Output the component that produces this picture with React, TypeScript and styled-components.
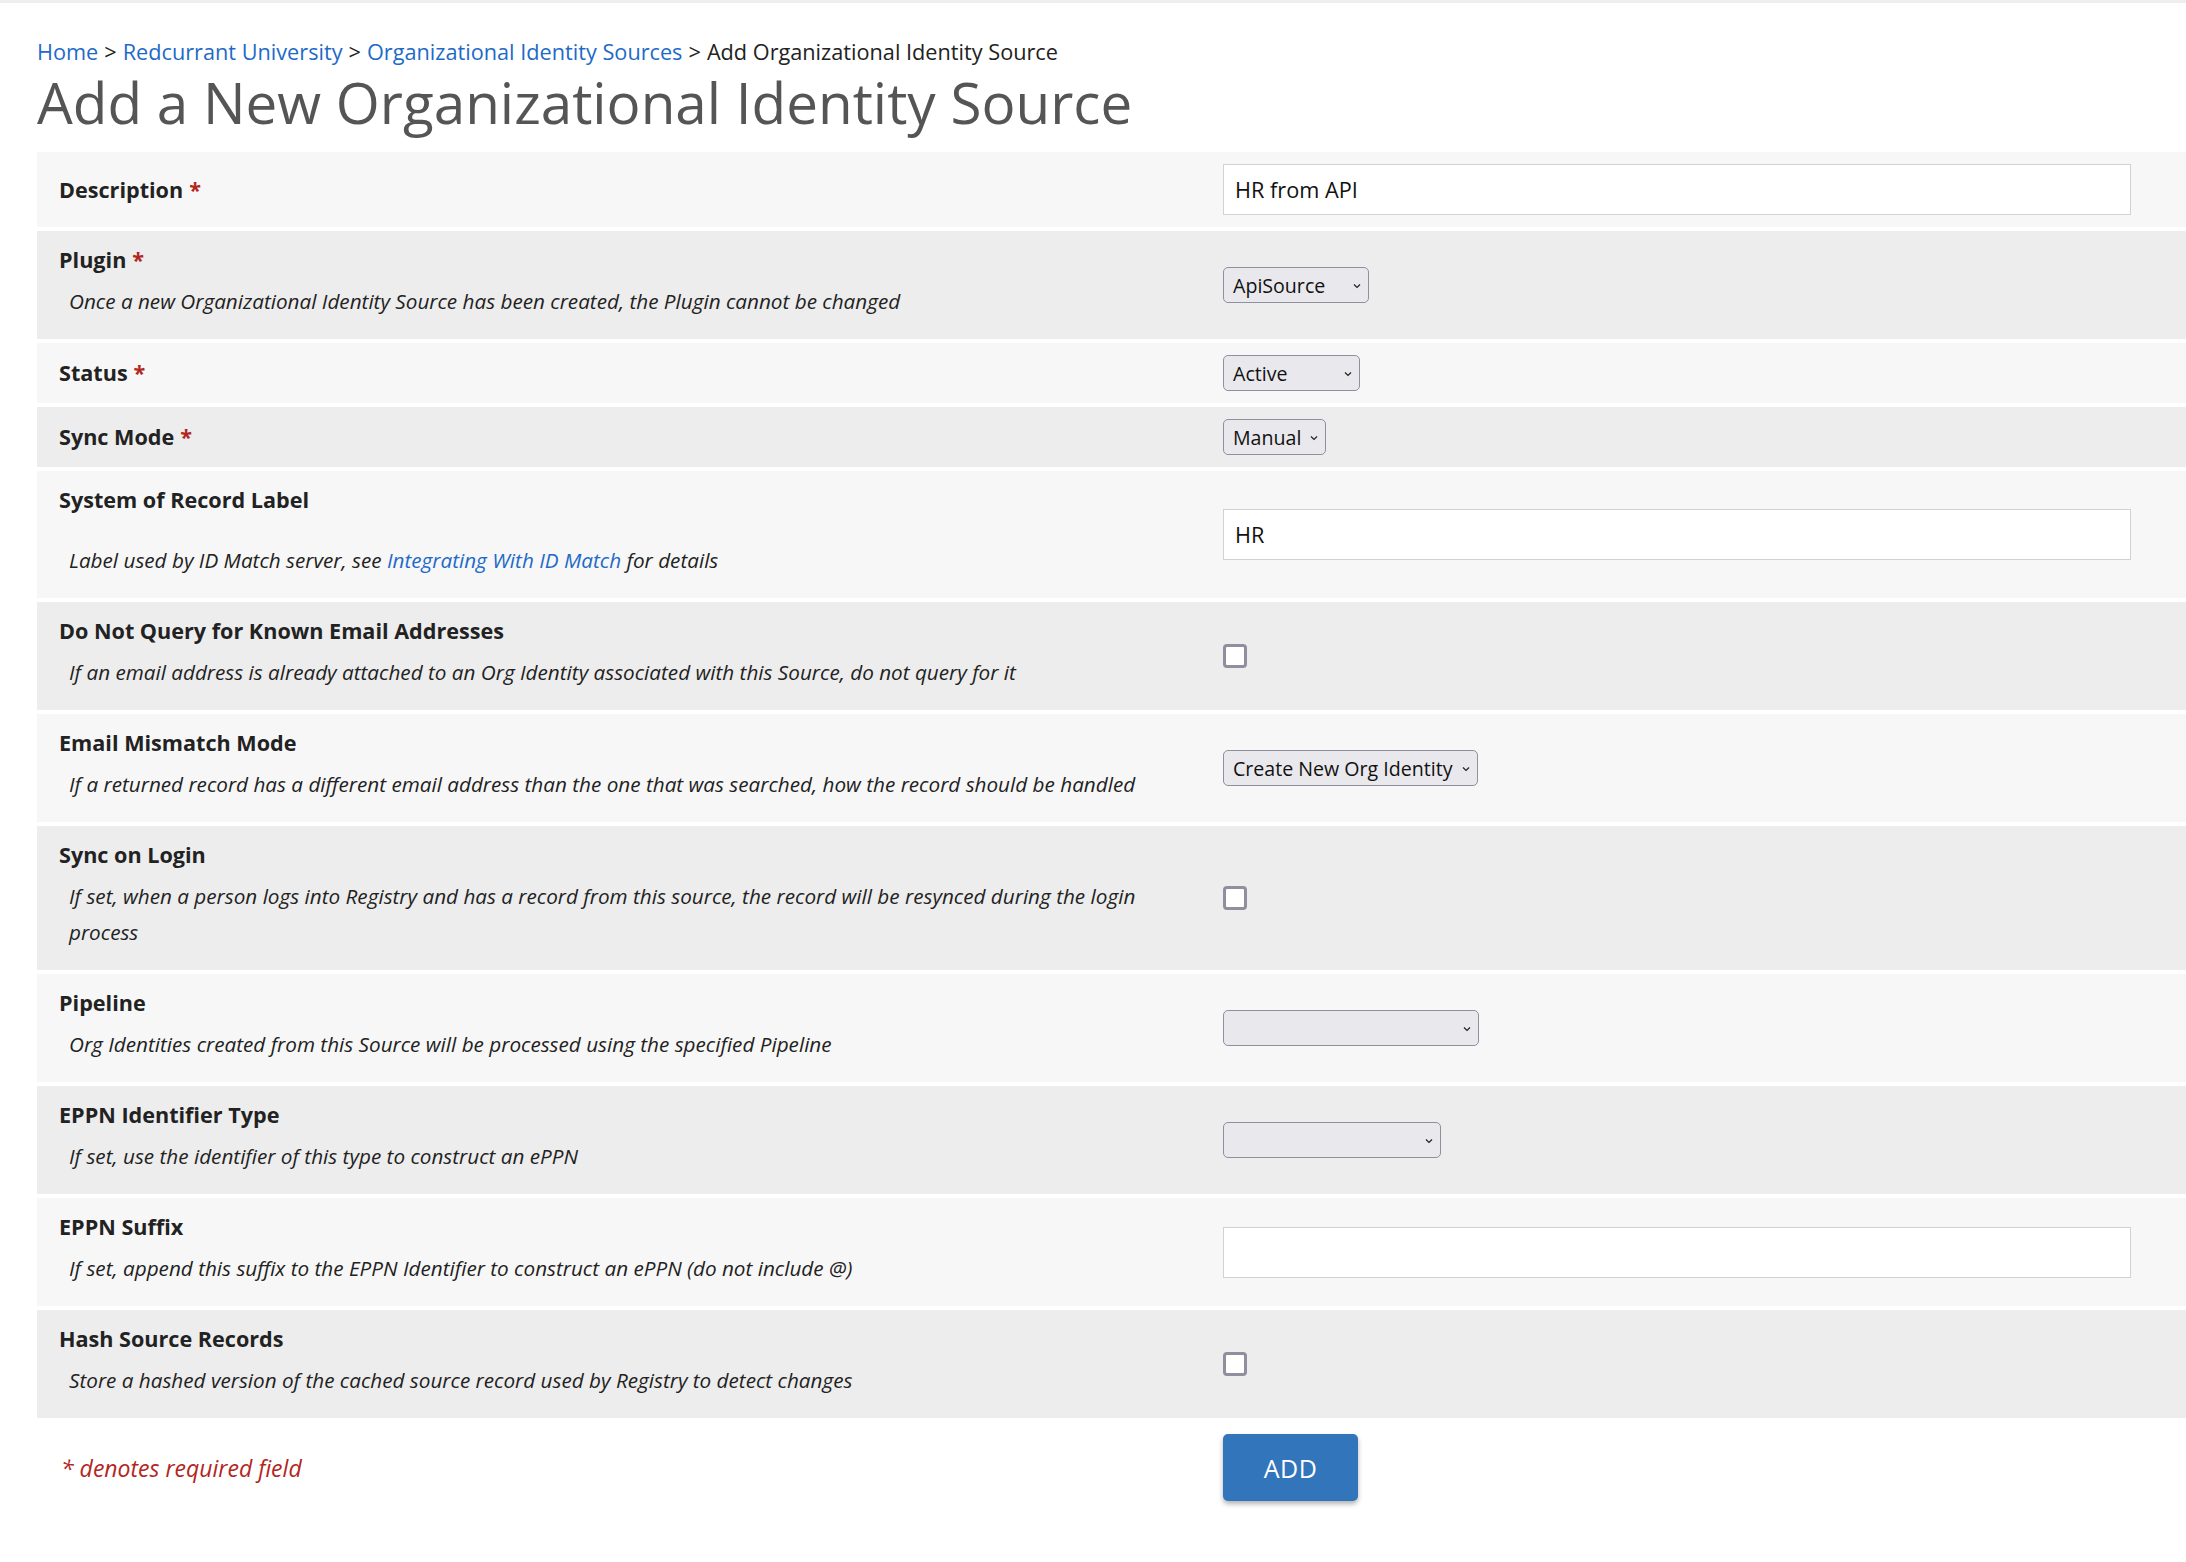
import React from 'react';
import styled, { createGlobalStyle } from 'styled-components';

const GlobalStyle = createGlobalStyle`
  html, body {
    margin: 0;
    padding: 0;
    background: #fff;
  }
  body {
    font-family: "Open Sans", "Noto Sans", sans-serif;
    color: #222;
    overflow-x: hidden;
  }
`;

const Page = styled.main`
  border-top: 3px solid #eeeeee;
  padding: 34px 0 40px 37px;
`;

const Breadcrumbs = styled.nav`
  font-size: 21.7px;
  line-height: 30px;
  color: #222;
`;

const Crumb = styled.a`
  color: #1e6ac8;
  text-decoration: none;
`;

const Separator = styled.span`
  padding: 0 6px;
`;

const Title = styled.h1`
  margin: 3px 0 16px;
  font-size: 56.6px;
  line-height: 66px;
  font-weight: 400;
  color: #555;
`;

const Form = styled.form`
  display: flex;
  flex-direction: column;
  gap: 4px;
`;

const Row = styled.div<{ $shade: boolean }>`
  display: grid;
  grid-template-columns: 1171px 1fr;
  align-items: center;
  background: ${p => (p.$shade ? '#ededed' : '#f7f7f7')};
`;

const LabelCell = styled.div`
  padding: 12px 28px 12px 22px;
`;

const Label = styled.label`
  display: block;
  font-size: 21.6px;
  line-height: 34px;
  font-weight: 700;
  color: #222;
`;

const Required = styled.span`
  color: #b3261e;
  margin-left: 6px;
`;

const Description = styled.div<{ $spaced?: boolean }>`
  margin-top: ${p => (p.$spaced ? '25px' : '6px')};
  padding: 0 0 8px 10px;
  font-size: 20.7px;
  line-height: 36px;
  font-style: italic;
  color: #222;
`;

const DocLink = styled.a`
  color: #1e6ac8;
  text-decoration: none;
`;

const ControlCell = styled.div`
  padding: 12px 55px 12px 15px;
  display: flex;
  align-items: center;
`;

const TextInput = styled.input`
  box-sizing: border-box;
  width: 100%;
  height: 51px;
  padding: 0 11px;
  border: 1px solid #d2d2d2;
  background: #fff;
  font-family: "Open Sans", sans-serif;
  font-size: 21.7px;
  color: #111;
  outline: none;
`;

const SelectWrap = styled.div`
  position: relative;
  display: inline-flex;
`;

const NativeSelect = styled.select<{ $width: number }>`
  box-sizing: border-box;
  appearance: none;
  width: ${p => p.$width}px;
  height: 36px;
  padding: 0 24px 0 9px;
  border: 1px solid #8f8f9d;
  border-radius: 5px;
  background: #e9e9ed;
  font-family: "Open Sans", sans-serif;
  font-size: 19.6px;
  color: #111;
`;

const Chevron = styled.svg`
  position: absolute;
  right: 8px;
  top: 50%;
  width: 8px;
  height: 6px;
  margin-top: -2px;
  pointer-events: none;
`;

const Checkbox = styled.input`
  appearance: none;
  box-sizing: border-box;
  width: 24px;
  height: 24px;
  margin: 0;
  border: 3px solid #8f8f9d;
  border-radius: 4px;
  background: #fff;
`;

const Footer = styled.div`
  display: grid;
  grid-template-columns: 1186px 1fr;
  align-items: center;
  margin-top: 12px;
`;

const RequiredNote = styled.span`
  padding-left: 24px;
  font-size: 23px;
  font-style: italic;
  color: #b3261e;
`;

const SubmitButton = styled.button`
  width: 135px;
  height: 67px;
  border: none;
  border-radius: 5px;
  background: #3275ba;
  color: #fff;
  font-family: "Open Sans", sans-serif;
  font-size: 25px;
  letter-spacing: 0.5px;
  box-shadow: 0 3px 5px rgba(0, 0, 0, 0.3);
`;

type Field = {
  label: string;
  required?: boolean;
  description?: React.ReactNode;
  spaced?: boolean;
  control: React.ReactNode;
};

const Select = ({ width, value }: { width: number; value: string }) => (
  <SelectWrap>
    <NativeSelect $width={width} defaultValue={value}>
      <option value={value}>{value}</option>
    </NativeSelect>
    <Chevron viewBox="0 0 8 6">
      <path d="M1 1.5 L4 4.5 L7 1.5" fill="none" stroke="#222" strokeWidth="1.2" />
    </Chevron>
  </SelectWrap>
);

const fields: Field[] = [
  { label: 'Description', required: true, control: <TextInput defaultValue="HR from API" /> },
  {
    label: 'Plugin',
    required: true,
    description: 'Once a new Organizational Identity Source has been created, the Plugin cannot be changed',
    control: <Select width={146} value="ApiSource" />,
  },
  { label: 'Status', required: true, control: <Select width={137} value="Active" /> },
  { label: 'Sync Mode', required: true, control: <Select width={103} value="Manual" /> },
  {
    label: 'System of Record Label',
    spaced: true,
    description: (
      <>
        Label used by ID Match server, see <DocLink href="#">Integrating With ID Match</DocLink> for details
      </>
    ),
    control: <TextInput defaultValue="HR" />,
  },
  {
    label: 'Do Not Query for Known Email Addresses',
    description: 'If an email address is already attached to an Org Identity associated with this Source, do not query for it',
    control: <Checkbox type="checkbox" />,
  },
  {
    label: 'Email Mismatch Mode',
    description: 'If a returned record has a different email address than the one that was searched, how the record should be handled',
    control: <Select width={255} value="Create New Org Identity" />,
  },
  {
    label: 'Sync on Login',
    description:
      'If set, when a person logs into Registry and has a record from this source, the record will be resynced during the login process',
    control: <Checkbox type="checkbox" />,
  },
  {
    label: 'Pipeline',
    description: 'Org Identities created from this Source will be processed using the specified Pipeline',
    control: <Select width={256} value="" />,
  },
  {
    label: 'EPPN Identifier Type',
    description: 'If set, use the identifier of this type to construct an ePPN',
    control: <Select width={218} value="" />,
  },
  {
    label: 'EPPN Suffix',
    description: 'If set, append this suffix to the EPPN Identifier to construct an ePPN (do not include @)',
    control: <TextInput defaultValue="" />,
  },
  {
    label: 'Hash Source Records',
    description: 'Store a hashed version of the cached source record used by Registry to detect changes',
    control: <Checkbox type="checkbox" />,
  },
];

const App = () => {
  return (
    <>
      <GlobalStyle />
      <Page>
        <Breadcrumbs>
          <Crumb href="#">Home</Crumb>
          <Separator>&gt;</Separator>
          <Crumb href="#">Redcurrant University</Crumb>
          <Separator>&gt;</Separator>
          <Crumb href="#">Organizational Identity Sources</Crumb>
          <Separator>&gt;</Separator>
          Add Organizational Identity Source
        </Breadcrumbs>
        <Title>Add a New Organizational Identity Source</Title>

        <Form onSubmit={e => e.preventDefault()}>
          {fields.map((field, i) => (
            <Row key={field.label} $shade={i % 2 === 1}>
              <LabelCell>
                <Label>
                  {field.label}
                  {field.required && <Required>*</Required>}
                </Label>
                {field.description && <Description $spaced={field.spaced}>{field.description}</Description>}
              </LabelCell>
              <ControlCell>{field.control}</ControlCell>
            </Row>
          ))}
          <Footer>
            <RequiredNote>* denotes required field</RequiredNote>
            <SubmitButton type="submit">ADD</SubmitButton>
          </Footer>
        </Form>
      </Page>
    </>
  );
};

export default App;
